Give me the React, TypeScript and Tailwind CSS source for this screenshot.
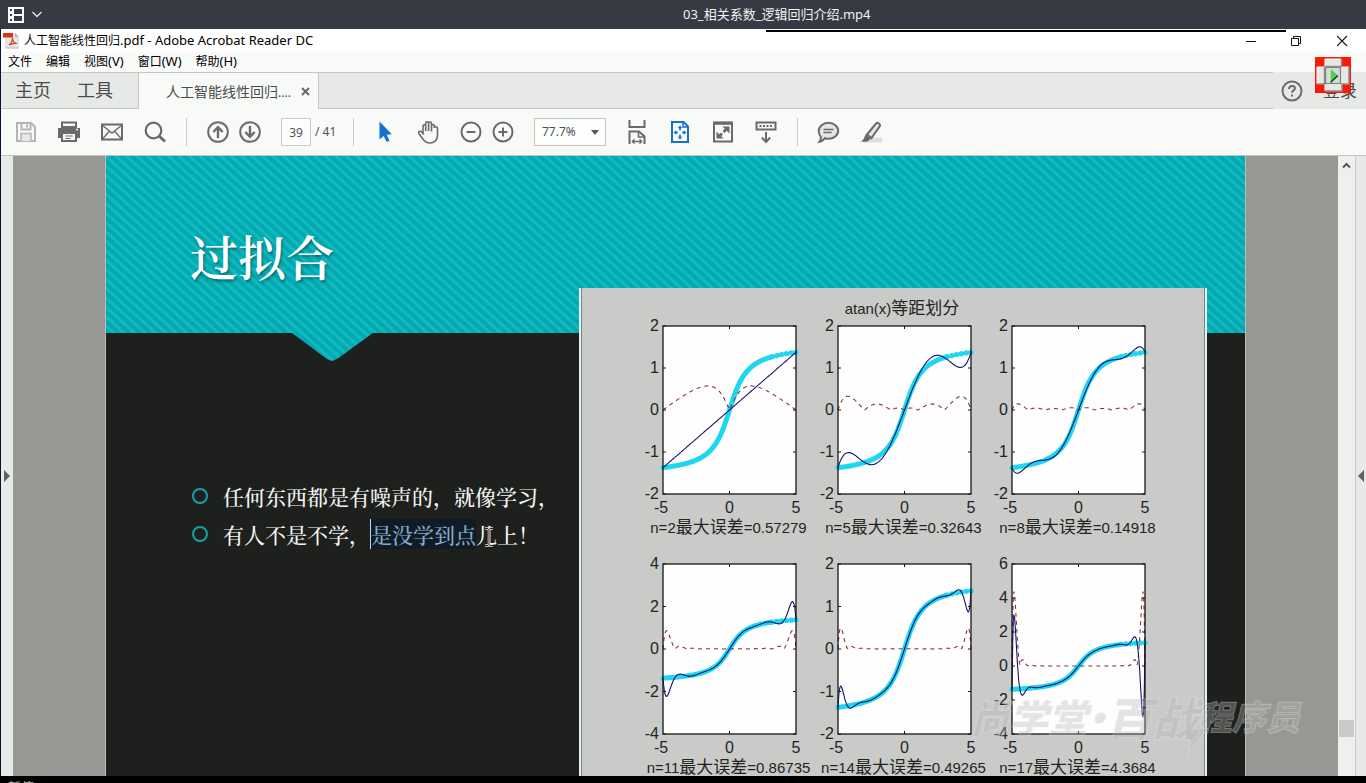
import type { ReactNode } from "react";

const UI_FONT = "font-['Noto_Sans','Noto_Sans_CJK_SC',sans-serif]";

/* ---------- icons ---------- */

function Icon({ children, className = "text-[#696b69]" }: { children: ReactNode; className?: string }) {
  return (
    <svg viewBox="0 0 24 24" width="24" height="24" fill="none" stroke="currentColor" strokeWidth="2" className={className} aria-hidden="true">
      {children}
    </svg>
  );
}

const SaveIcon = (
  <Icon className="text-[#b3b5b3]">
    <path d="M3 3h14l4 4v14H3z" />
    <path d="M7.5 3v6.5h9V3" />
    <path d="M13 4.5v3" />
    <path d="M7 21v-7.5h10V21" fill="#e6e7e6" strokeWidth="1.5" />
  </Icon>
);
const PrintIcon = (
  <Icon>
    <path d="M5 2.5h14V7H5z" />
    <path d="M1 8h22v10H1z" fill="currentColor" stroke="none" />
    <path d="M5 13h14v8H5z" fill="#f7f9f7" />
    <path d="M8.5 16h7M8.5 18.5h5" strokeWidth="1.2" />
    <path d="M19 9.5h2" stroke="#f7f9f7" strokeWidth="1.5" />
  </Icon>
);
const MailIcon = (
  <Icon>
    <path d="M2 4.5h20v15H2z" />
    <path d="M2 5l10 8L22 5M2.5 19l7-8M21.5 19l-7-8" strokeWidth="1.4" />
  </Icon>
);
const SearchIcon = (
  <Icon>
    <circle cx="10.5" cy="10.5" r="7.8" strokeWidth="2.2" />
    <path d="M16 16l6 5.5" strokeWidth="3" />
  </Icon>
);
const UpIcon = (
  <Icon>
    <circle cx="12" cy="12" r="9.8" />
    <path d="M12 18V7.5M7.3 12L12 7.2l4.7 4.8" strokeWidth="2.4" />
  </Icon>
);
const DownIcon = (
  <Icon>
    <circle cx="12" cy="12" r="9.8" />
    <path d="M12 6v10.5M7.3 12l4.7 4.8 4.7-4.8" strokeWidth="2.4" />
  </Icon>
);
const ArrowCursorIcon = (
  <Icon className="text-[#1570cf]">
    <path d="M6.5 1.5v18l4.2-3.6 3 6 2.8-1.4-2.9-5.7 5.2-.6z" fill="currentColor" stroke="none" />
  </Icon>
);
const HandIcon = (
  <Icon>
    <path
      d="M7 14.5V6.2c0-2 2.7-2 2.7 0V11M9.7 11V3.2c0-2 2.9-2 2.9 0V11M12.6 11V3.5c0-2 2.9-2 2.9 0V11.5M15.5 11.5V6c0-2 2.8-2 2.8 0V8M18.3 8c.2-1.8 3.2-1.6 3.2.2v7.3c0 4.5-3.2 7.5-7.5 7.5-4 0-5.6-1.7-7.3-4.3L2.8 13.5c-.9-1.7 1.2-3 2.5-1.7l2.5 2.7"
      strokeWidth="1.6"
      strokeLinejoin="round"
    />
  </Icon>
);
const MinusIcon = (
  <Icon>
    <circle cx="12" cy="12" r="9.5" />
    <path d="M7.5 12h9" />
  </Icon>
);
const PlusIcon = (
  <Icon>
    <circle cx="12" cy="12" r="9.5" />
    <path d="M7.5 12h9M12 7.5v9" />
  </Icon>
);
const FitWidthIcon = (
  <Icon>
    <path d="M4.5 0v7h15V0" />
    <path d="M4.5 24V11.5H14l5.5 5V24" />
    <path d="M13.5 11.5v5.5h6" strokeWidth="1.6" />
    <path d="M7.5 21.5h9M9.5 19.3L7.3 21.5l2.2 2.2M14.5 19.3l2.2 2.2-2.2 2.2" strokeWidth="1.3" />
  </Icon>
);
const FitPageIcon = (
  <Icon className="text-[#1570cf]">
    <path d="M4 2h11.5L20 6.5V22H4z" />
    <path d="M15 2v5h5" strokeWidth="1.5" />
    <path d="M12 7.5v3M12 14.5v3M6.8 12.5H10M14 12.5h3.2" strokeWidth="1.6" />
    <path d="M12 5.5l2.3 2.8H9.7zM12 19.5l2.3-2.8H9.7zM5.5 12.5l2.8-2.3v4.6zM18.5 12.5l-2.8-2.3v4.6z" fill="currentColor" stroke="none" />
  </Icon>
);
const FullScreenIcon = (
  <Icon>
    <path d="M3 2.5h18v19H3z" />
    <path d="M3 3.3h18" strokeWidth="3" />
    <path d="M11.5 6.5h7v7zM5.5 11.5v7h7z" fill="currentColor" stroke="none" />
    <path d="M12.5 12l3-3M8 16.5l3-3" strokeWidth="2.8" />
  </Icon>
);
const ToolbarDownIcon = (
  <Icon>
    <path d="M2.5 2.5h19v7h-19z" />
    <path d="M5.5 6h13" strokeDasharray="2 1.5" />
    <path d="M12 12v9M7.8 17.5l4.2 4.5 4.2-4.5" />
  </Icon>
);
const CommentIcon = (
  <Icon>
    <path d="M12.5 2.8c5.4 0 9.7 3.6 9.7 8s-4.3 8-9.7 8c-1.3 0-2.5-.2-3.6-.6-1.3 1.8-3.1 3.3-5.4 3.6 1.2-1.4 1.6-3.3 1.3-5.2-1.5-1.5-2.1-3.5-2.1-5.8 0-4.4 4.4-8 9.8-8z" fill="#e4e6e4" />
    <path d="M7.5 9.5h10M7.5 12.5h8" strokeWidth="1.3" />
  </Icon>
);
const HighlightIcon = (
  <Icon>
    <path d="M8 17.5h15v5H5z" fill="#dddfdd" stroke="none" />
    <path d="M8 14.5L17 3.5c1.6-1.6 4.8.6 3.8 2.8L12.5 18z" fill="#e4e6e4" />
    <path d="M6.5 14.5l5.5 4.2-4 3H2l2.5-2.5z" fill="currentColor" stroke="none" />
  </Icon>
);

function ToolButton({ label, children }: { label: string; children: ReactNode }) {
  return (
    <button type="button" aria-label={label} className="size-6 shrink-0">
      {children}
    </button>
  );
}

const Separator = () => <span className="-mr-px h-7 w-px shrink-0 bg-[#c9cbc9]" />;

/* ---------- figure ---------- */

type Plot = { n: number; x: number; y: number; h: number; min: number; max: number; step: number; err: string };

const PLOTS: Plot[] = [
  { n: 2, x: 84, y: 38, h: 168, min: -2, max: 2, step: 1, err: "0.57279" },
  { n: 5, x: 259, y: 38, h: 168, min: -2, max: 2, step: 1, err: "0.32643" },
  { n: 8, x: 433, y: 38, h: 168, min: -2, max: 2, step: 1, err: "0.14918" },
  { n: 11, x: 84, y: 276, h: 170, min: -4, max: 4, step: 2, err: "0.86735" },
  { n: 14, x: 259, y: 276, h: 170, min: -2, max: 2, step: 1, err: "0.49265" },
  { n: 17, x: 433, y: 276, h: 170, min: -4, max: 6, step: 2, err: "4.3684" },
];
const PLOT_W = 133;

// Lagrange interpolation of atan on n + 1 equally spaced nodes over [-5, 5]
function interpolate(n: number, x: number) {
  let sum = 0;
  for (let i = 0; i <= n; i++) {
    const xi = -5 + (10 * i) / n;
    let term = Math.atan(xi);
    for (let j = 0; j <= n; j++) {
      if (j === i) continue;
      const xj = -5 + (10 * j) / n;
      term *= (x - xj) / (xi - xj);
    }
    sum += term;
  }
  return sum;
}

function PlotPanel({ n, x, y, h, min, max, step, err }: Plot) {
  const px = (v: number) => x + ((v + 5) / 10) * PLOT_W;
  const py = (v: number) => y + ((max - v) / (max - min)) * h;
  const trace = (f: (v: number) => number, to = 5) => {
    const points: string[] = [];
    for (let v = -5; v <= to + 1e-9; v += 0.05) points.push(`${px(v).toFixed(1)},${py(f(v)).toFixed(1)}`);
    return points.join(" ");
  };
  const ticks: number[] = [];
  for (let v = min; v <= max; v += step) ticks.push(v);
  const dots: number[] = [];
  for (let v = 3.2; v <= 5.1; v += 0.36) dots.push(v);

  return (
    <g>
      <rect x={x} y={y} width={PLOT_W} height={h} fill="#fdfefd" />
      <polyline points={trace(Math.atan, 3.2)} fill="none" stroke="#1fd6f0" strokeWidth="5" strokeLinecap="round" />
      <polyline points={trace((v) => Math.atan(v))} fill="none" stroke="#1fd6f0" strokeWidth="3" />
      {dots.map((v) => (
        <circle key={v} cx={px(v)} cy={py(Math.atan(v))} r="2.6" fill="#1fd6f0" />
      ))}
      <polyline points={trace((v) => Math.abs(interpolate(n, v) - Math.atan(v)))} fill="none" stroke="#8a3238" strokeWidth="1.1" strokeDasharray="4 4" />
      <polyline points={trace((v) => interpolate(n, v))} fill="none" stroke="#14146e" strokeWidth="1.1" />
      <rect x={x} y={y} width={PLOT_W} height={h} fill="none" stroke="#161616" strokeWidth="1.3" />
      {ticks.map((v) => (
        <g key={v}>
          <path d={`M${x} ${py(v)}h3M${x + PLOT_W} ${py(v)}h-3`} stroke="#161616" />
          <text x={x - 4} y={py(v) + 5} textAnchor="end" className="text-[16px]">
            {v}
          </text>
        </g>
      ))}
      <path d={`M${px(0)} ${y}v3M${px(0)} ${y + h}v-3`} stroke="#161616" />
      {[-5, 0, 5].map((v) => (
        <text key={v} x={px(v) - (v < 0 ? 2 : 0)} y={y + h + 19} textAnchor="middle" className="text-[16px]">
          {v}
        </text>
      ))}
      <text x={px(0) - 1} y={y + h + 39} textAnchor="middle">
        n={n}
        <tspan className="text-[17px]">最大误差</tspan>={err}
      </text>
    </g>
  );
}

function Figure() {
  return (
    <div className="mt-[132px] w-[628px] shrink-0 self-stretch overflow-hidden border-x-2 border-[#eef1f2] bg-[#cacbc9]">
      <svg
        viewBox="3 0 622 488"
        className="block w-full border-x border-[#6d8596] fill-[#222422] font-['Liberation_Sans','Noto_Sans_CJK_SC',sans-serif] text-[15px]"
        role="img"
        aria-label="atan(x)等距划分"
      >
        <text x="323" y="26" textAnchor="middle">
          atan(x)<tspan className="text-[17px]">等距划分</tspan>
        </text>
        {PLOTS.map((plot) => (
          <PlotPanel key={plot.n} {...plot} />
        ))}
      </svg>
    </div>
  );
}

/* ---------- slide ---------- */

function Bullet({ children }: { children: ReactNode }) {
  return (
    <li className="flex items-center gap-[15px] whitespace-nowrap">
      <span className="size-4 shrink-0 rounded-full border-2 border-[#17a0a8]" />
      <span>{children}</span>
    </li>
  );
}

function Slide() {
  return (
    <article className="relative flex min-w-0 flex-1 overflow-hidden border-x border-[#b9bcb9] bg-[#1e201d] font-['Noto_Serif_CJK_SC','Noto_Sans_CJK_SC',serif]">
      <div className="absolute inset-x-0 top-0 h-[205px] bg-[repeating-linear-gradient(42deg,#00aab1_0px,#00aab1_3px,#14b8be_4px,#14b8be_6px,#00aab1_7px)] [clip-path:polygon(0_0,100%_0,100%_177px,267px_177px,231px_203px,226px_205px,221px_203px,186px_177px,0_177px)]" />
      <div className="relative flex min-w-0 flex-1 pr-[38px]">
        <div className="flex min-w-0 flex-1 flex-col pt-[70px] pl-[84px]">
          <h1 className="text-[48px] leading-[60px] font-semibold text-white [text-shadow:1px_2px_3px_rgba(0,60,65,0.6)]">过拟合</h1>
          <ul className="mt-[191px] pl-[2px] text-[21px] leading-[38px] font-medium text-[#f4f6f4]">
            <Bullet>任何东西都是有噪声的，就像学习，</Bullet>
            <Bullet>
              有人不是不学，
              <mark className="border-l border-[#c4d4e0] bg-[#0f1b26] text-[#86abc9]">是没学到点</mark>
              <span className="relative">
                儿
                <svg viewBox="0 0 10 20" width="10" height="20" className="absolute top-2 left-2" aria-hidden="true">
                  <path d="M1 1.5h3l1 1 1-1h3M5 2.5v15M1 18.5h3l1-1 1 1h3" fill="none" stroke="#e8eae8" strokeWidth="2.5" />
                  <path d="M1 1.5h3l1 1 1-1h3M5 2.5v15M1 18.5h3l1-1 1 1h3" fill="none" stroke="#1e201d" strokeWidth="1" />
                </svg>
              </span>
              上！
            </Bullet>
          </ul>
        </div>
        <Figure />
      </div>
    </article>
  );
}

function Watermark() {
  return (
    <div className="pointer-events-none absolute right-[66px] bottom-[30px] flex items-start font-['Noto_Sans_CJK_SC',sans-serif] text-[39px] leading-[60px] font-black whitespace-nowrap text-[#b4b6b4]/35 italic [-webkit-text-stroke:1px_rgba(240,242,240,0.3)]">
      <span>尚学堂</span>
      <span className="-mx-[10px]">·</span>
      <span className="text-[46px]">百战</span>
      <span className="text-[34px]">程序员</span>
      <svg width="26" height="26" viewBox="0 0 26 26" className="absolute right-[90px] -bottom-2" aria-hidden="true">
        <path d="M2 0h22L4 26l3-14H0z" fill="#b4b6b4" fillOpacity="0.35" stroke="#f0f2f0" strokeOpacity="0.3" />
      </svg>
    </div>
  );
}

/* ---------- window ---------- */

function TitleBar() {
  return (
    <div className="flex h-[23px] items-center bg-[#fefffe] pl-[2px] text-[12px] text-black">
      <svg viewBox="0 0 17 17" width="17" height="17" className="shrink-0" aria-hidden="true">
        <path d="M2 1h10l4 4v11H2z" fill="#e3e5e3" />
        <path d="M12 1l4 4h-4z" fill="#b3b5b3" />
        <path d="M0 1h10v4.5H0z" fill="#e2310f" />
        <path d="M6 13c2-1.5 3.5-4 3.5-7.5 0 4 2 6 4.5 6-3-.5-5 0-8 1.5z" fill="none" stroke="#d8442c" strokeWidth="1.2" />
        <path d="M2 16h14" stroke="#b9bbb9" />
      </svg>
      <span className="flex-1 pl-1">
        人工智能线性回归<span className="text-[13px]">.pdf - Adobe Acrobat Reader DC</span>
      </span>
      <div className="flex">
        <button type="button" aria-label="最小化" className="flex h-5 w-[46px] items-center justify-center">
          <svg width="12" height="12" viewBox="0 0 12 12" stroke="#111" aria-hidden="true">
            <path d="M1 6.5h10" />
          </svg>
        </button>
        <button type="button" aria-label="还原" className="flex h-5 w-[46px] items-center justify-center">
          <svg width="12" height="12" viewBox="0 0 12 12" fill="none" stroke="#111" aria-hidden="true">
            <path d="M.5 3.5h7v7h-7zM2.5 3.5v-2h7v7h-2" />
          </svg>
        </button>
        <button type="button" aria-label="关闭" className="flex h-5 w-[46px] items-center justify-center">
          <svg width="12" height="12" viewBox="0 0 12 12" stroke="#111" strokeWidth="1.1" aria-hidden="true">
            <path d="M0 1l10 10M10 1L0 11" />
          </svg>
        </button>
      </div>
    </div>
  );
}

const MENUS = [
  { name: "文件" },
  { name: "编辑" },
  { name: "视图", key: "(V)" },
  { name: "窗口", key: "(W)" },
  { name: "帮助", key: "(H)" },
];

function MenuBar() {
  return (
    <nav className="flex h-5 items-center gap-[14px] bg-[#f9fbf9] pl-[7px] text-[12px] text-black">
      {MENUS.map((menu) => (
        <button type="button" key={menu.name}>
          {menu.name}
          {menu.key && <span className="text-[13px]">{menu.key}</span>}
        </button>
      ))}
    </nav>
  );
}

function TabBar() {
  return (
    <div className="flex h-[37px] bg-[#e7e9e7] text-[#4a4c4a]">
      <div className="flex flex-1 border-t border-b border-[#c6c8c6]">
        <div className="flex w-[137px] items-center gap-[26px] pl-[14px] text-[18px]">
          <button type="button">主页</button>
          <button type="button">工具</button>
        </div>
        <div className="-mb-px flex w-[181px] items-center justify-between border-x border-[#c6c8c6] bg-[#f8faf8] pr-2 pl-[27px] text-[14px]">
          <span className="whitespace-nowrap">
            人工智能线性回归<span className="text-[12px]">....</span>
          </span>
          <button type="button" aria-label="关闭标签">
            <svg width="9" height="9" viewBox="0 0 9 9" stroke="#666866" strokeWidth="2" aria-hidden="true">
              <path d="M1 1l7 7M8 1L1 8" />
            </svg>
          </button>
        </div>
      </div>
      <div className="flex w-[93px] items-center justify-between pr-[9px] pl-2">
        <button type="button" aria-label="帮助">
          <svg width="22" height="22" viewBox="0 0 22 22" fill="none" stroke="#696b69" strokeWidth="2" aria-hidden="true">
            <circle cx="11" cy="11" r="9.5" />
            <path d="M8 9c0-4 6-4 6-.8 0 2-3 2.1-3 4.5M11 14.5v2" />
          </svg>
        </button>
        <button type="button" className="text-[17px]">
          登录
        </button>
      </div>
    </div>
  );
}

function Toolbar() {
  return (
    <div className="flex h-[47px] items-center gap-[19px] border-b border-[#c2c5c2] bg-[#f8faf8] pl-[13px] text-[12px] text-[#505250]">
      <ToolButton label="保存">{SaveIcon}</ToolButton>
      <ToolButton label="打印">{PrintIcon}</ToolButton>
      <ToolButton label="电子邮件">{MailIcon}</ToolButton>
      <ToolButton label="查找">{SearchIcon}</ToolButton>
      <Separator />
      <div className="flex gap-2 pl-px">
        <ToolButton label="上一页">{UpIcon}</ToolButton>
        <ToolButton label="下一页">{DownIcon}</ToolButton>
      </div>
      <div className="flex items-center gap-1">
        <input aria-label="页码" defaultValue="39" className="h-7 w-[30px] border border-[#c9cbc9] bg-[#fdfffd] text-center" />
        <span className="w-[19px] whitespace-nowrap">/ 41</span>
      </div>
      <Separator />
      <div className="flex gap-[19px] pl-px">
        <ToolButton label="选择">{ArrowCursorIcon}</ToolButton>
        <ToolButton label="抓手">{HandIcon}</ToolButton>
      </div>
      <div className="flex gap-2">
        <ToolButton label="缩小">{MinusIcon}</ToolButton>
        <ToolButton label="放大">{PlusIcon}</ToolButton>
      </div>
      <div className="relative">
        <select aria-label="缩放比例" className="block h-7 w-[72px] appearance-none border border-[#c2c4c2] bg-[#fdfffd] pl-[7px]">
          <option>77.7%</option>
        </select>
        <svg width="8" height="5" viewBox="0 0 8 5" className="pointer-events-none absolute top-3 right-[7px]" aria-hidden="true">
          <path d="M0 0h8L4 5z" fill="#555755" />
        </svg>
      </div>
      <ToolButton label="适合宽度">{FitWidthIcon}</ToolButton>
      <ToolButton label="适合页面">{FitPageIcon}</ToolButton>
      <ToolButton label="全屏">{FullScreenIcon}</ToolButton>
      <ToolButton label="工具栏">{ToolbarDownIcon}</ToolButton>
      <Separator />
      <ToolButton label="注释">{CommentIcon}</ToolButton>
      <ToolButton label="高亮">{HighlightIcon}</ToolButton>
    </div>
  );
}

function RecorderBadge() {
  return (
    <svg width="36" height="36" viewBox="0 0 36 36" className="absolute top-[28px] right-[15px]" aria-hidden="true">
      <path d="M0 0h36v36H0z" fill="#fa1a05" />
      <path d="M10 2h17v32H10zM2 10h32v17H2z" fill="#e6e8e6" />
      <path d="M10 34V2M2 27V10h8M10 2h16M27 10h7" fill="none" stroke="#fff" strokeWidth="1" />
      <path d="M26.5 2v8M34 10v17h-7v7H10M9.5 10v17H2M10 9.5h17" fill="none" stroke="#8d8f8d" strokeWidth="1.5" />
      <path d="M10.5 10.5h15v16h-15z" fill="#d5d8d5" stroke="#7f817f" strokeWidth="1.2" />
      <path d="M15 11.5v14l8-7z" fill="#58c85c" />
      <path d="M15 11.5v14" stroke="#e9fbe9" />
      <path d="M15.5 25.5l7.5-7" stroke="#0b3d12" strokeWidth="1.3" />
    </svg>
  );
}

function DocumentArea() {
  return (
    <main className="relative flex min-h-0 flex-1 bg-[#969894]">
      <button type="button" aria-label="展开导航窗格" className="flex w-3 items-center justify-center bg-[#e7e9e7] pt-5">
        <svg width="6" height="12" viewBox="0 0 6 12" aria-hidden="true">
          <path d="M0 0v12l6-6z" fill="#606260" />
        </svg>
      </button>
      <div className="flex min-w-0 flex-1 px-[92px]">
        <Slide />
      </div>
      <div className="flex w-[17px] flex-col items-center justify-between bg-[#eef0ee] pt-[6px] pb-[39px]">
        <svg width="9" height="7" viewBox="0 0 9 7" fill="none" stroke="#555755" strokeWidth="2" aria-hidden="true">
          <path d="M1 5.5L4.5 2 8 5.5" />
        </svg>
        <span className="h-[17px] w-[15px] bg-[#c9cbc9]" />
      </div>
      <button type="button" aria-label="展开工具窗格" className="flex w-[11px] items-center justify-center border-l border-[#c9cbc9] bg-[#e7e9e7] pt-5">
        <svg width="6" height="12" viewBox="0 0 6 12" aria-hidden="true">
          <path d="M6 0v12L0 6z" fill="#606260" />
        </svg>
      </button>
      <Watermark />
    </main>
  );
}

export default function App() {
  return (
    <div className={`flex h-screen flex-col overflow-hidden bg-black ${UI_FONT}`}>
      <header className="grid h-[29px] shrink-0 grid-cols-2 items-center bg-[#383a43] text-[13px] text-[#f0f1f2]">
        <div className="flex items-center gap-2 pl-2">
          <svg width="16" height="16" viewBox="0 0 16 16" aria-hidden="true">
            <path
              fillRule="evenodd"
              fill="#fff"
              d="M0 0h16v16H0zM2 2v2h2V2zM2 7v2h2V7zM2 12v2h2v-2zM6 2v5h8V2zM6 9v5h8V9z"
            />
          </svg>
          <svg width="10" height="7" viewBox="0 0 10 7" fill="none" stroke="#e8e9ea" strokeWidth="1.3" aria-hidden="true">
            <path d="M.5 1L5 5.5 9.5 1" />
          </svg>
        </div>
        <h2 className="whitespace-nowrap">03_相关系数_逻辑回归介绍.mp4</h2>
      </header>
      <div className="relative flex min-h-0 flex-1 flex-col border-l border-[#081338]">
        <TitleBar />
        <MenuBar />
        <TabBar />
        <Toolbar />
        <DocumentArea />
        <span className="absolute top-px right-20 h-[2px] w-[520px] bg-black" />
        <RecorderBadge />
      </div>
      <footer className="h-[7px] shrink-0 overflow-hidden bg-black pt-[3px] pl-2 text-[13px] leading-[16px] text-[#b8bab8]">暂停</footer>
    </div>
  );
}
